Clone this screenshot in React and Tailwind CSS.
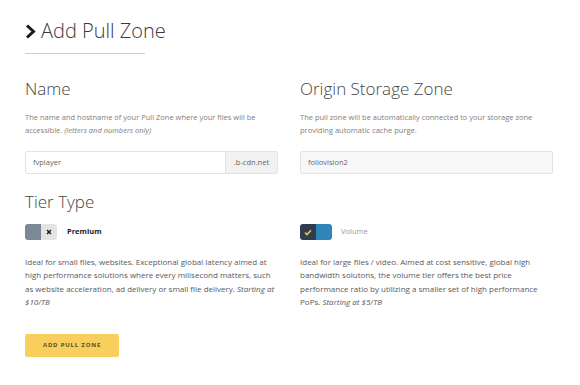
const font = { fontFamily: "'Open Sans', Lato, sans-serif" };

function Toggle({ on }) {
  if (on) {
    return (
      <div className="flex h-4 w-8 overflow-hidden rounded-[3px]">
        <div className="flex w-4 items-center justify-center bg-[#2f3d50]">
          <svg width="8" height="7" viewBox="0 0 8 7">
            <path d="M1 3.5 L3 5.5 L7 1.2" fill="none" stroke="#f5c242" strokeWidth="1.6" />
          </svg>
        </div>
        <div className="w-4 bg-[#2f86b9]" />
      </div>
    );
  }
  return (
    <div className="flex h-4 w-8 overflow-hidden rounded-[3px]">
      <div className="w-4 bg-[#7c8896]" />
      <div className="flex w-4 items-center justify-center bg-[#e4e4e4]">
        <svg width="6" height="6" viewBox="0 0 6 6">
          <path d="M1 1 L5 5 M5 1 L1 5" stroke="#222" strokeWidth="1.5" />
        </svg>
      </div>
    </div>
  );
}

export default function App() {
  return (
    <div className="h-[385px] w-[580px] bg-white px-[25px] pt-[19px] text-[#444]" style={font}>
      <div className="flex items-center gap-[5px]">
        <svg width="11" height="15" viewBox="0 0 11 15">
          <path d="M2 1.5 L8.5 7.5 L2 13.5" fill="none" stroke="#1a1a1a" strokeWidth="3" />
        </svg>
        <h1 className="text-[20px] font-light leading-[24px] text-[#3a3a3a]">Add Pull Zone</h1>
      </div>
      <div className="mt-[10px] h-px w-[120px] bg-[#cfcfcf]" />

      {/* name + origin */}
      <div className="mt-[24px] grid grid-cols-[253px_253px] gap-x-[22px]">
        <div>
          <h2 className="text-[17px] font-light leading-[22px]">Name</h2>
          <p className="mt-[11px] text-[7.5px] leading-[13px] text-[#808080]">
            The name and hostname of your Pull Zone where your files will be accessible.{" "}
            <i>(letters and numbers only)</i>
          </p>
          <div className="mt-[14px] flex h-[23px] rounded-[2px] border border-[#e3e3e3] text-[7.5px] text-[#666]">
            <div className="flex flex-1 items-center bg-white pl-[7px]">fvplayer</div>
            <div className="flex w-[52px] items-center justify-center border-l border-[#e3e3e3] bg-[#f1f1f1]">.b-cdn.net</div>
          </div>
        </div>
        <div>
          <h2 className="text-[17px] font-light leading-[22px]">Origin Storage Zone</h2>
          <p className="mt-[11px] text-[7.5px] leading-[13px] text-[#808080]">
            The pull zone will be automatically connected to your storage zone providing automatic cache purge.
          </p>
          <div className="mt-[14px] flex h-[23px] items-center rounded-[2px] border border-[#e3e3e3] bg-[#f8f8f8] pl-[7px] text-[7.5px] text-[#666]">
            foliovision2
          </div>
        </div>
      </div>

      <h2 className="mt-[17px] text-[17px] font-light leading-[22px]">Tier Type</h2>

      {/* tiers */}
      <div className="mt-[11px] grid grid-cols-[253px_253px] gap-x-[22px]">
        <div>
          <div className="flex items-center gap-[10px]">
            <Toggle on={false} />
            <span className="text-[7.5px] font-bold text-[#222]">Premium</span>
          </div>
          <p className="mt-[15px] text-[8px] leading-[13.3px] text-[#595959]">
            Ideal for small files, websites. Exceptional global latency aimed at high performance solutions where every milisecond matters, such as website acceleration, ad delivery or small file delivery.{" "}
            <i>Starting at $10/TB</i>
          </p>
        </div>
        <div>
          <div className="flex items-center gap-[9px]">
            <Toggle on />
            <span className="text-[7.5px] text-[#999]">Volume</span>
          </div>
          <p className="mt-[15px] text-[8px] leading-[13.3px] text-[#595959]">
            Ideal for large files / video. Aimed at cost sensitive, global high bandwidth solutons, the volume tier offers the best price performance ratio by utilizing a smaller set of high performance PoPs.{" "}
            <i>Starting at $5/TB</i>
          </p>
        </div>
      </div>

      <button className="mt-[26px] flex h-[23px] w-[94px] items-center justify-center rounded-[2px] bg-[#f8cf5c] text-[6px] font-bold tracking-[0.8px] text-[#5a4a2a]">
        ADD PULL ZONE
      </button>
    </div>
  );
}
